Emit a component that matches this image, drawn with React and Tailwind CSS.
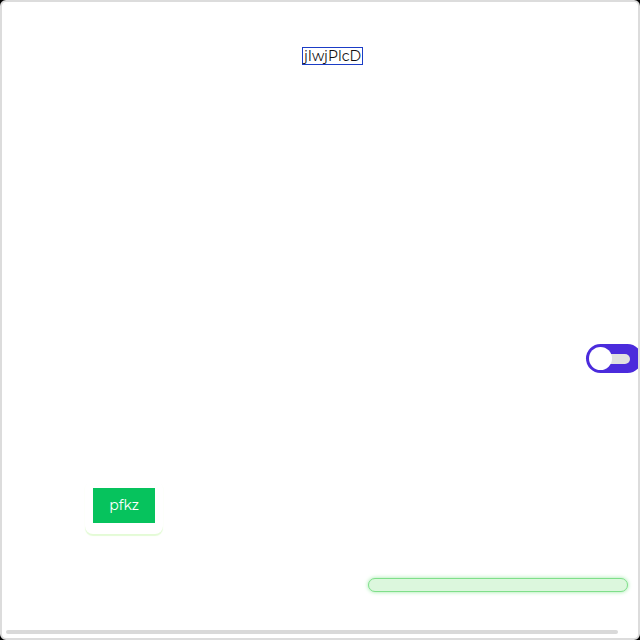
export default function App() {
  return (
    <div className="w-[640px] h-[640px] bg-black">
      <div className="flex flex-col items-start w-full h-full rounded-[6px] border-2 border-[#dcdcdc] bg-white overflow-hidden font-['Montserrat','Noto_Sans',sans-serif]">
        {/* label */}
        <div className="mt-[45px] ml-[300px] border border-[#1b3dc6] px-px text-[14px] leading-[16px] text-[#111]">
          jIwjPlcD
        </div>

        {/* toggle */}
        <div className="self-end mt-[279px] mr-[-4px] flex items-center w-[56px] h-[29px] rounded-full bg-[#4b2bdc] p-[3px]">
          <div className="w-[23px] h-[23px] shrink-0 rounded-full bg-white z-10" />
          <div className="ml-[-12px] w-[30px] h-[10px] rounded-full bg-[#e0e0e0]" />
        </div>

        {/* button card */}
        <div className="mt-[107px] ml-[83px] rounded-[8px] bg-white shadow-[0_2px_1px_#e4fbd6] px-[8px] pt-[8px] pb-[11px]">
          <button className="w-[62px] h-[35px] bg-[#06c35d] text-white text-[14px]">pfkz</button>
        </div>

        {/* progress bar */}
        <div className="self-end mt-[44px] mr-[10px] w-[260px] h-[14px] rounded-full bg-[#dcf7dd] border-[1.5px] border-[#7fdf8a] shadow-[0_0_4px_#9be9a4]" />

        {/* scroll bar */}
        <div className="mt-[38px] ml-[4px] w-[612px] h-[4px] rounded-full bg-[#d9d9d9]" />
      </div>
    </div>
  );
}
